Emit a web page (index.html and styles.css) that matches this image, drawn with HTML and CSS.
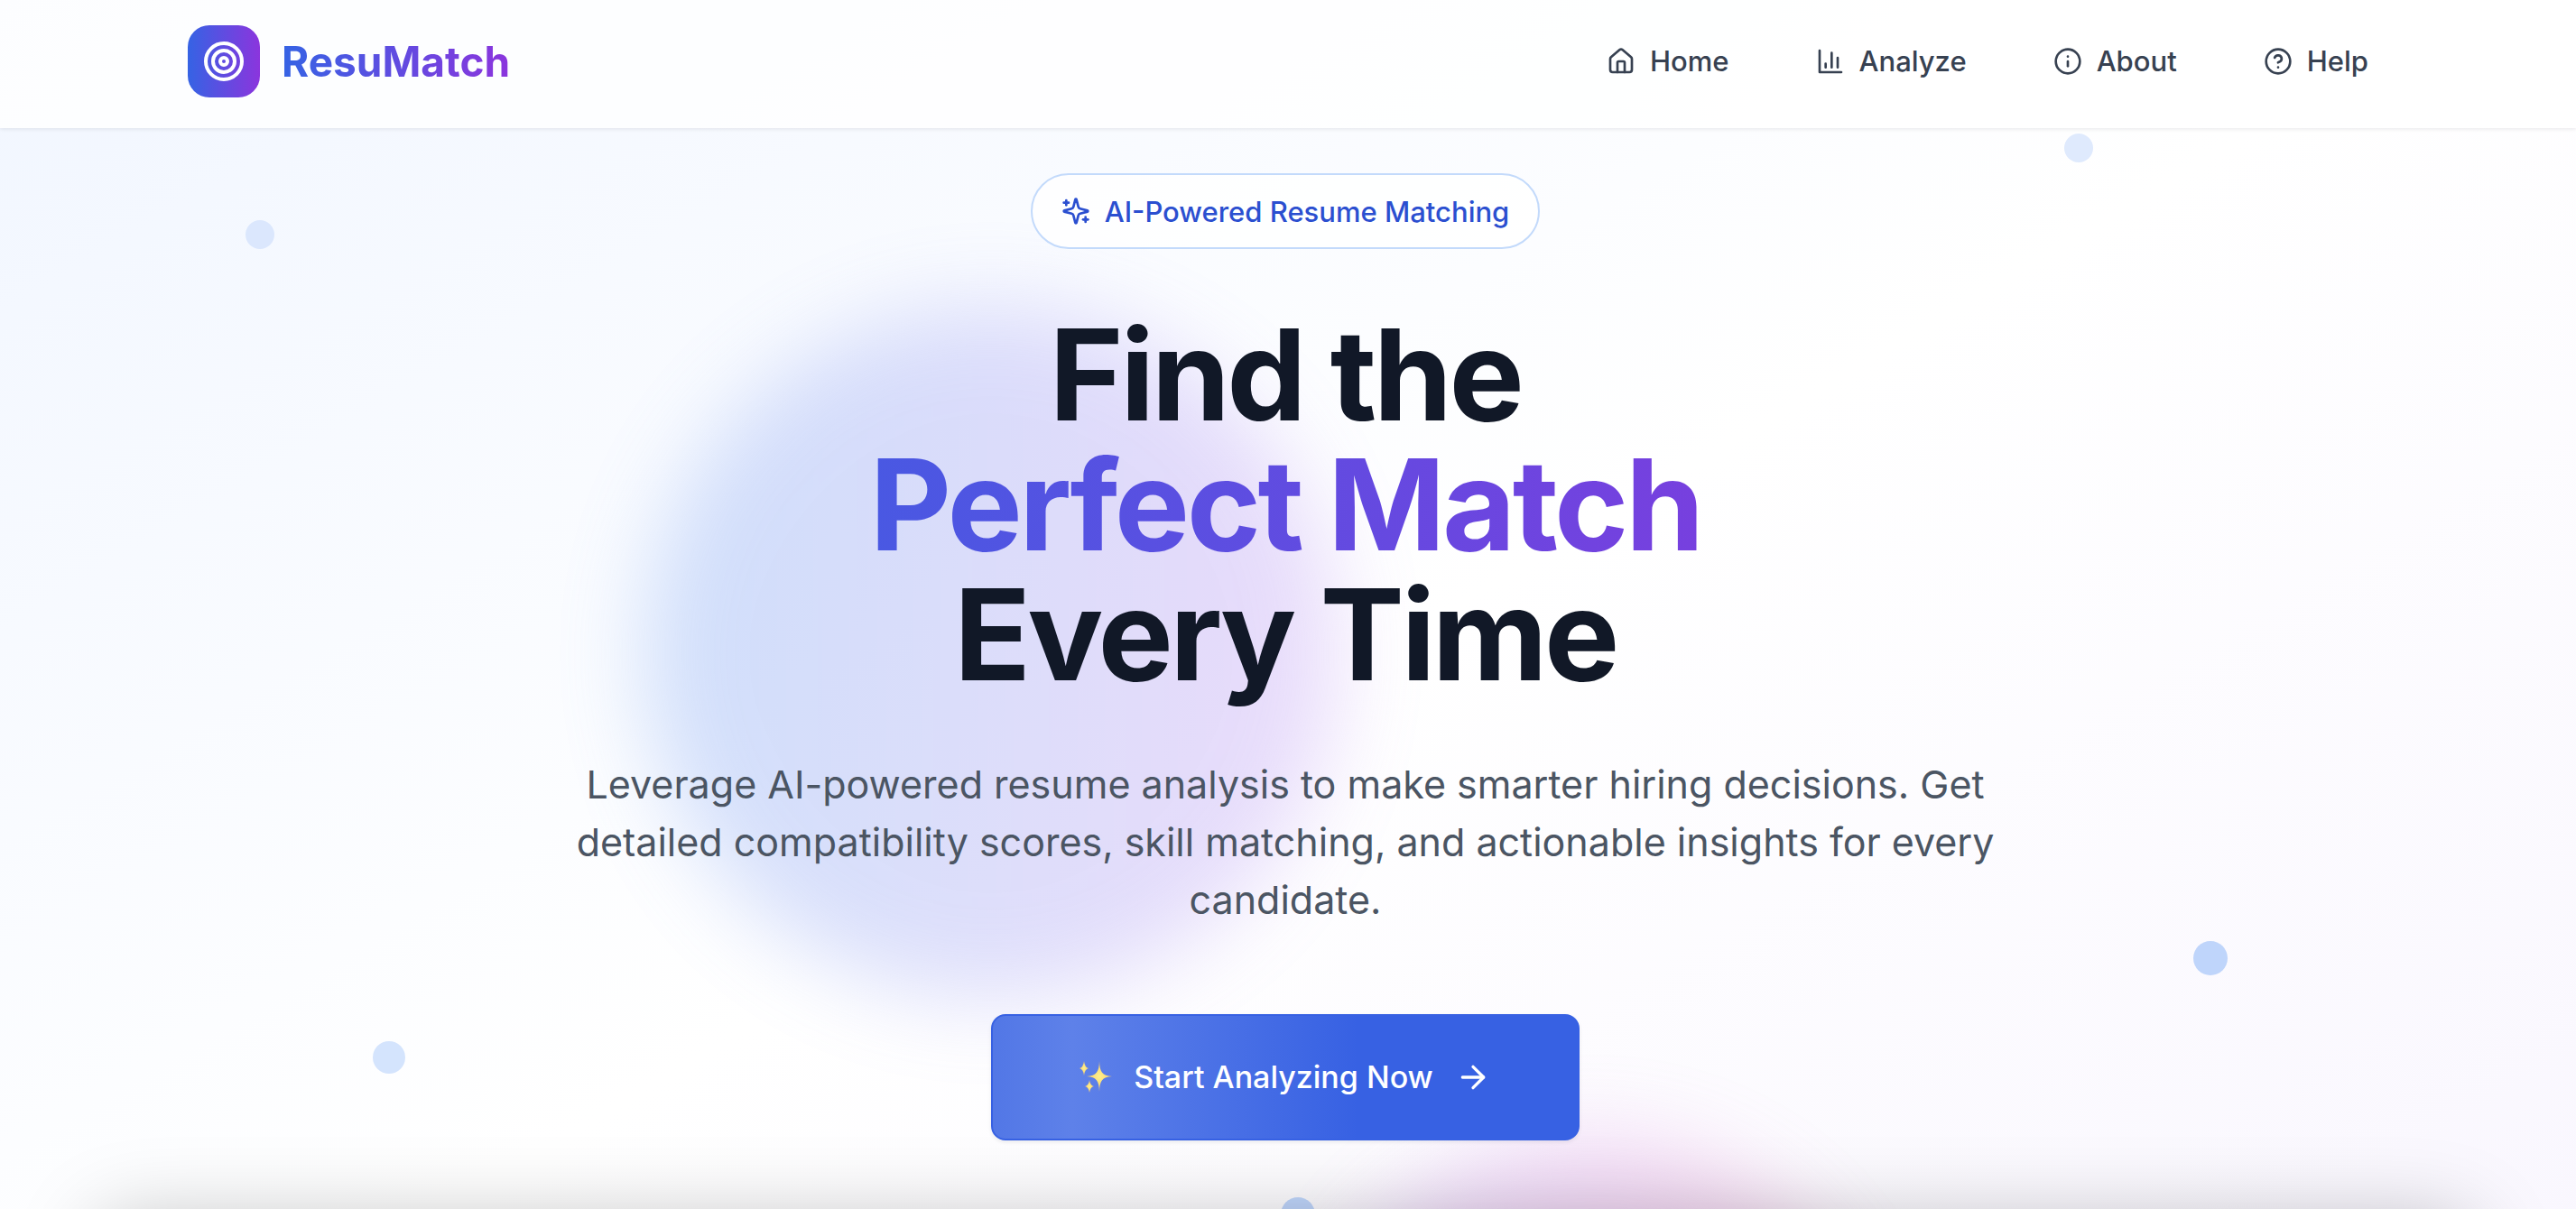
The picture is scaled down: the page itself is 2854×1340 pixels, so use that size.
FILE: index.html
```html
<!DOCTYPE html>
<html lang="en">
<head>
<meta charset="utf-8">
<meta name="viewport" content="width=device-width, initial-scale=1">
<title>ResuMatch</title>
<link rel="stylesheet" href="styles.css">
</head>
<body>
<header class="header">
  <div class="header-inner">
    <a class="brand" href="#">
      <span class="brand-mark">
        <svg viewBox="0 0 24 24" aria-hidden="true"><circle cx="12" cy="12" r="10"/><circle cx="12" cy="12" r="6"/><circle cx="12" cy="12" r="2"/></svg>
      </span>
      <span class="brand-name">ResuMatch</span>
    </a>
    <nav class="nav" aria-label="Main">
      <a class="nav-link" href="#">
        <svg viewBox="0 0 24 24" aria-hidden="true"><path d="M15 21v-8a1 1 0 0 0-1-1h-4a1 1 0 0 0-1 1v8"/><path d="M3 10a2 2 0 0 1 .709-1.528l7-5.999a2 2 0 0 1 2.582 0l7 5.999A2 2 0 0 1 21 10v9a2 2 0 0 1-2 2H5a2 2 0 0 1-2-2z"/></svg>
        <span>Home</span>
      </a>
      <a class="nav-link" href="#">
        <svg viewBox="0 0 24 24" aria-hidden="true"><path d="M3 3v18h18"/><path d="M18 17V9"/><path d="M13 17V5"/><path d="M8 17v-3"/></svg>
        <span>Analyze</span>
      </a>
      <a class="nav-link" href="#">
        <svg viewBox="0 0 24 24" aria-hidden="true"><circle cx="12" cy="12" r="10"/><path d="M12 16v-4"/><path d="M12 8h.01"/></svg>
        <span>About</span>
      </a>
      <a class="nav-link" href="#">
        <svg viewBox="0 0 24 24" aria-hidden="true"><circle cx="12" cy="12" r="10"/><path d="M9.09 9a3 3 0 0 1 5.83 1c0 2-3 3-3 3"/><path d="M12 17h.01"/></svg>
        <span>Help</span>
      </a>
    </nav>
  </div>
</header>
<main class="hero">
  <div class="blob blob-blue"></div>
  <div class="blob blob-pink"></div>
  <span class="dot dot-1"></span>
  <span class="dot dot-2"></span>
  <span class="dot dot-3"></span>
  <span class="dot dot-4"></span>
  <span class="dot dot-5"></span>
  <div class="panel-shadow"></div>
  <div class="hero-content">
    <p class="badge">
      <svg viewBox="0 0 24 24" aria-hidden="true"><path d="M9.937 15.5A2 2 0 0 0 8.5 14.063l-6.135-1.582a.5.5 0 0 1 0-.962L8.5 9.936A2 2 0 0 0 9.937 8.5l1.582-6.135a.5.5 0 0 1 .963 0L14.063 8.5A2 2 0 0 0 15.5 9.937l6.135 1.581a.5.5 0 0 1 0 .964L15.5 14.063a2 2 0 0 0-1.437 1.437l-1.582 6.135a.5.5 0 0 1-.963 0z"/><path d="M20 17v4"/><path d="M22 19h-4"/><path d="M4 3v4"/><path d="M6 5H2"/></svg>
      <span>AI-Powered Resume Matching</span>
    </p>
    <h1 class="title">Find the<span class="title-accent">Perfect Match</span>Every Time</h1>
    <p class="lead">Leverage AI-powered resume analysis to make smarter hiring decisions. Get detailed compatibility scores, skill matching, and actionable insights for every candidate.</p>
    <button class="cta" type="button">
      <svg class="cta-sparkles" viewBox="0 0 36 36" aria-hidden="true">
        <defs><radialGradient id="gold"><stop offset="0" stop-color="#fff08a"/><stop offset=".5" stop-color="#fbdf7c"/><stop offset="1" stop-color="#e8bd72"/></radialGradient></defs>
        <path fill="url(#gold)" d="M22 0C22.500 12 25 16.500 36 17C25 17.500 22.500 22 22 34C21.500 22 19 17.500 8 17C19 16.500 21.500 12 22 0Z"/>
        <path fill="url(#gold)" d="M5 0Q5.800 7 10 8Q5.800 9 5 16Q4.200 9 0 8Q4.200 7 5 0Z"/>
        <path fill="url(#gold)" d="M11 21Q11.800 27 16 28Q11.800 29 11 35Q10.200 29 6 28Q10.200 27 11 21Z"/>
      </svg>
      <span>Start Analyzing Now</span>
      <svg class="cta-arrow" viewBox="0 0 24 24" aria-hidden="true"><path d="M5 12h14"/><path d="m12 5 7 7-7 7"/></svg>
    </button>
  </div>
</main>
</body>
</html>
```
FILE: styles.css
```css
*,
*::before,
*::after {
  box-sizing: border-box;
}

body {
  margin: 0;
  min-height: 100vh;
  display: flex;
  flex-direction: column;
  font-family: Inter, "Liberation Sans", sans-serif;
  color: #111827;
  background: linear-gradient(to bottom right, #f1f6ff 0%, #ffffff 48%, #f8f5fe 100%) 0 0 / 100% 1700px;
}

svg {
  flex: none;
  fill: none;
  stroke: currentColor;
  stroke-width: 2;
  stroke-linecap: round;
  stroke-linejoin: round;
}

h1,
p {
  margin: 0;
}

/* Header */
.header {
  position: relative;
  z-index: 1;
  padding: 28px 6px 34px 0;
  background: rgba(255, 255, 255, 0.8);
  box-shadow: 0 1px 4px rgba(15, 23, 42, 0.1);
}

.header-inner {
  max-width: 2432px;
  margin: 0 auto;
  display: flex;
  align-items: center;
  justify-content: space-between;
}

.brand {
  display: flex;
  align-items: center;
  gap: 24px;
  text-decoration: none;
}

.brand-mark {
  display: grid;
  place-items: center;
  width: 80px;
  height: 80px;
  border-radius: 24px;
  color: #fff;
  background: linear-gradient(90deg, #3563e4, #8b35dd);
}

.brand-mark svg {
  width: 48px;
  height: 48px;
}

.brand-name {
  font-size: 46px;
  line-height: 64px;
  font-weight: 700;
  color: transparent;
  background: linear-gradient(90deg, #3563e4, #8b35dd);
  background-clip: text;
}

.nav {
  display: flex;
  gap: 96px;
  padding-right: 16px;
}

.nav-link {
  display: flex;
  align-items: center;
  gap: 16px;
  font-size: 31px;
  line-height: 48px;
  font-weight: 500;
  color: #374151;
  text-decoration: none;
}

.nav-link svg {
  width: 32px;
  height: 32px;
}

/* Hero */
.hero {
  position: relative;
  flex: 1;
  overflow: hidden;
  padding: 50px 6px 76px 0;
}

.hero-content {
  position: relative;
  display: flex;
  flex-direction: column;
  align-items: center;
  text-align: center;
}

.badge {
  display: flex;
  align-items: center;
  gap: 16px;
  height: 84px;
  padding: 0 32px;
  border: 2px solid #c3dafb;
  border-radius: 42px;
  font-size: 31px;
  font-weight: 500;
  color: #2b4fd0;
  background: rgba(255, 255, 255, 0.8);
}

.badge svg {
  width: 32px;
  height: 32px;
}

.title {
  margin-top: 67px;
  font-size: 140px;
  line-height: 144px;
  font-weight: 700;
  letter-spacing: -0.025em;
}

.title-accent {
  display: block;
  padding: 0 400px;
  color: transparent;
  background: linear-gradient(90deg, #3563e4, #8b35dd);
  background-clip: text;
}

.lead {
  max-width: 1640px;
  margin-top: 62px;
  font-size: 43px;
  line-height: 64px;
  color: #4b5563;
}

.cta {
  display: flex;
  align-items: center;
  gap: 24px;
  height: 140px;
  margin-top: 95px;
  padding: 0 96px;
  border: 2px solid #3761e3;
  border-radius: 16px;
  font: 500 34px/56px Inter, "Liberation Sans", sans-serif;
  color: #fff;
  background: linear-gradient(90deg, #5277e6 0, #5e81e9 88px, #3761e3 405px);
  box-shadow: 0 2px 4px rgba(15, 23, 42, 0.08);
}

.cta-sparkles {
  width: 36px;
  height: 36px;
  stroke: none;
}

.cta-arrow {
  width: 40px;
  height: 40px;
}

/* Decoration behind the content */
.blob,
.dot,
.panel-shadow {
  position: absolute;
}

.blob {
  border-radius: 50%;
  opacity: 0.3;
  filter: blur(48px);
}

.blob-blue {
  top: 198px;
  left: 25%;
  width: 768px;
  height: 768px;
  background: linear-gradient(90deg, #6c9cf1, #b88af1);
}

.blob-pink {
  top: 1120px;
  right: 27%;
  width: 640px;
  height: 640px;
  background: linear-gradient(90deg, #c08cf4, #e87fc4);
}

.dot {
  width: 36px;
  height: 36px;
  border-radius: 50%;
  transform: translate(-50%, -50%);
  background: #d4e4fd;
}

.dot-1 {
  top: 118px;
  left: 10.1%;
  width: 32px;
  height: 32px;
  background: #dbe7fd;
}

.dot-2 {
  top: 22px;
  left: 80.7%;
  width: 32px;
  height: 32px;
  background: #dfeafd;
}

.dot-3 {
  top: 920px;
  left: 85.8%;
  width: 38px;
  height: 38px;
  background: #bfd5fb;
}

.dot-4 {
  top: 1030px;
  left: 15.1%;
}

.dot-5 {
  top: 1204px;
  left: 50.4%;
  width: 38px;
  height: 38px;
  background: #bfd5fb;
}

.panel-shadow {
  top: 1212px;
  left: 108px;
  right: 114px;
  height: 400px;
  border-radius: 32px;
  box-shadow: 0 0 90px rgba(0, 0, 0, 0.25);
}
```
